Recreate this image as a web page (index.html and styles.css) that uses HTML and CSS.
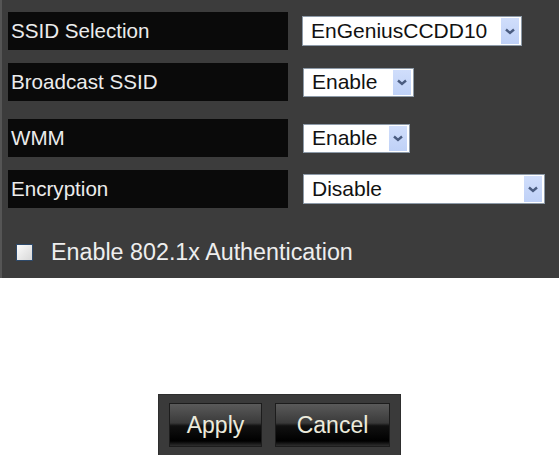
FILE: index.html
```html
<!DOCTYPE html>
<html lang="en">
<head>
    <meta charset="UTF-8">
    <title>Wireless Settings</title>
    <link rel="stylesheet" href="styles.css">
</head>
<body>

    <div class="panel">
        <div class="row">
            <div class="label">SSID Selection</div>
            <div class="select ssid">
                <span class="value">EnGeniusCCDD10</span>
                <span class="arrow"><svg width="10" height="7" viewBox="0 0 10 7"><path d="M1 1.5l4 3.5 4-3.5" fill="none" stroke="#4a5c80" stroke-width="2.4"/></svg></span>
            </div>
        </div>
        <div class="row wide-gap">
            <div class="label">Broadcast SSID</div>
            <div class="select short">
                <span class="value">Enable</span>
                <span class="arrow"><svg width="10" height="7" viewBox="0 0 10 7"><path d="M1 1.5l4 3.5 4-3.5" fill="none" stroke="#4a5c80" stroke-width="2.4"/></svg></span>
            </div>
        </div>
        <div class="row">
            <div class="label">WMM</div>
            <div class="select shorter">
                <span class="value">Enable</span>
                <span class="arrow"><svg width="10" height="7" viewBox="0 0 10 7"><path d="M1 1.5l4 3.5 4-3.5" fill="none" stroke="#4a5c80" stroke-width="2.4"/></svg></span>
            </div>
        </div>
        <div class="row">
            <div class="label">Encryption</div>
            <div class="select long">
                <span class="value">Disable</span>
                <span class="arrow"><svg width="10" height="7" viewBox="0 0 10 7"><path d="M1 1.5l4 3.5 4-3.5" fill="none" stroke="#4a5c80" stroke-width="2.4"/></svg></span>
            </div>
        </div>
        <label class="check-row">
            <span class="checkbox"></span>
            <span>Enable 802.1x Authentication</span>
        </label>
    </div>

    <div class="actions">
        <div class="button-box">
            <button class="btn apply">Apply</button>
            <button class="btn cancel">Cancel</button>
        </div>
    </div>

</body>
</html>
```

FILE: styles.css
```css
/* wireless basic settings panel */
body { margin: 0; background: #fff; font-family: "Liberation Sans", Arial, sans-serif; width: 559px; height: 455px; overflow: hidden; }

.panel { background: #3c3c3c; border-left: 2px solid #555; height: 278px; box-sizing: border-box; padding: 12px 0 0 6px; }
.row { display: flex; align-items: center; gap: 15px; margin-bottom: 13px; }
.row.wide-gap { margin-bottom: 18px; }
.label { width: 280px; height: 38px; background: #0a0a0a; color: #ececec; font-size: 20.6px; line-height: 38px; padding-left: 3px; box-sizing: border-box; }

.select { display: flex; align-items: center; justify-content: space-between; height: 30px; background: #fff; border: 1px solid #8d9aa8; box-sizing: border-box; padding: 1px 2px 1px 8px; color: #111; font-size: 21px; }
.select.ssid { width: 220px; margin-left: -1px; }
.select.short { width: 111px; height: 29px; }
.select.shorter { width: 107px; height: 29px; }
.select.long { width: 242px; }
.value { line-height: 26px; }
.arrow { width: 18px; align-self: stretch; background: linear-gradient(#d0defb, #bfd1f7); display: flex; align-items: center; justify-content: center; }

.check-row { display: flex; align-items: center; gap: 18px; margin-top: 31px; padding-left: 8px; color: #eee; font-size: 23.3px; }
.checkbox { width: 17px; height: 17px; border: 1px solid #2e4a6b; box-sizing: border-box; background: linear-gradient(135deg, #fbfbfb, #d8d8d8); }

.actions { display: flex; justify-content: center; padding-top: 116px; }
.button-box { background: #3a3a3a; border: 1px solid #2e2e2e; padding: 8px 10px 10px; display: flex; gap: 13px; }
.btn { height: 44px; border: 1px solid #1c1c1c; color: #ecebdc; font-family: "Liberation Sans", Arial, sans-serif; font-size: 23px; padding: 0; background: linear-gradient(#5a5a5a, #3a3a3a 45%, #111 52%, #000 88%, #2f2f2f); }
.btn.apply { width: 93px; }
.btn.cancel { width: 115px; }
```
